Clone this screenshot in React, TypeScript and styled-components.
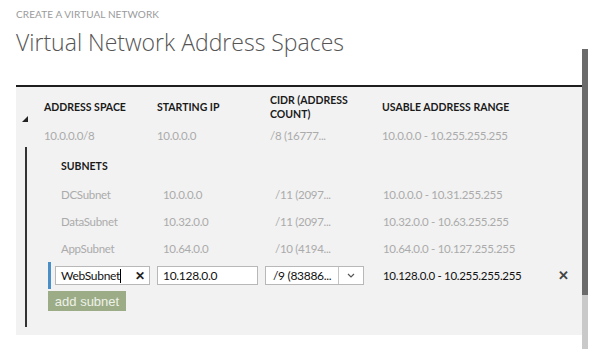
import React from 'react'
import styled, { createGlobalStyle } from 'styled-components'

interface ISubnet {
    name: string;
    start: string;
    cidr: string;
    range: string;
}

const subnets: ISubnet[] = [
    { name: 'DCSubnet', start: '10.0.0.0', cidr: '/11 (2097...', range: '10.0.0.0 - 10.31.255.255' },
    { name: 'DataSubnet', start: '10.32.0.0', cidr: '/11 (2097...', range: '10.32.0.0 - 10.63.255.255' },
    { name: 'AppSubnet', start: '10.64.0.0', cidr: '/10 (4194...', range: '10.64.0.0 - 10.127.255.255' },
]

const GlobalStyle = createGlobalStyle`
    html, body {
        margin: 0;
        padding: 0;
        background: #fff;
        font-family: Lato, "Open Sans", sans-serif;
    }
`

const Page = styled.div`
    display: flex;
    width: 602px;
    height: 349px;
    overflow: hidden;
`

const Content = styled.div`
    width: 566px;
    padding-left: 16px;
    display: flex;
    flex-direction: column;
`

const Eyebrow = styled.div`
    margin-top: 8px;
    font-size: 10px;
    line-height: 13px;
    color: #9a9a9a;
    letter-spacing: 0.1px;
`

const Title = styled.h1`
    margin: 6px 0 0;
    font-family: "Open Sans", sans-serif;
    font-weight: 300;
    font-size: 23px;
    line-height: 30px;
    color: #555;
`

const Panel = styled.div`
    margin-top: 28px;
    border-top: 2px solid #1e1e1e;
    background: #f2f2f2;
    padding: 6px 0 8px;
`

const HeadRow = styled.div`
    display: grid;
    grid-template-columns: 28px 113px 113px 112px 1fr;
    align-items: center;
    height: 28px;
`

const HeadCell = styled.div`
    font-size: 10.5px;
    font-weight: 700;
    line-height: 14px;
    color: #1a1a1a;
    text-transform: uppercase;
`

const SpaceRow = styled.div`
    display: grid;
    grid-template-columns: 28px 113px 113px 112px 1fr;
    align-items: center;
    height: 22px;
    margin-top: 3px;
`

const Toggle = styled.div`
    align-self: start;
    margin-top: -8px;
    padding-left: 6px;
    height: 6px;
    display: flex;
`

const Muted = styled.div<{ $pad?: number }>`
    padding-left: ${p => p.$pad ?? 0}px;
    font-size: 11.5px;
    letter-spacing: -0.3px;
    color: #ababab;
    white-space: nowrap;
`

const SubnetBlock = styled.div`
    margin: 1px 0 0 9px;
    border-left: 2px solid #333;
    padding: 6px 0 16px 21px;
`

const SubnetsLabel = styled(HeadCell)`
    height: 26px;
    display: flex;
    align-items: center;
    padding-left: 13px;
    margin-bottom: 2px;
`

const Row = styled.div<{ $editing?: boolean }>`
    display: grid;
    grid-template-columns: 3px 102px 108px 118px 1fr 24px;
    align-items: center;
    height: 27px;
`

const Marker = styled.div<{ $on?: boolean }>`
    align-self: stretch;
    background: ${p => (p.$on ? '#4a8fc7' : 'transparent')};
    width: 3px;
`

const Field = styled.div<{ $w: number }>`
    box-sizing: border-box;
    width: ${p => p.$w}px;
    height: 19px;
    margin-left: 4px;
    border: 1px solid #b8b8b8;
    background: #fff;
    display: flex;
    align-items: center;
    padding-left: 5px;
    font-size: 12px;
    letter-spacing: -0.3px;
    color: #111;
`

const Caret = styled.span`
    display: inline-block;
    width: 1px;
    height: 14px;
    background: #000;
`

const Clear = styled.span`
    margin-left: auto;
    margin-right: 4px;
    font-size: 12px;
    font-weight: 700;
    color: #222;
    line-height: 1;
`

const SelectText = styled.span`
    flex: 1;
    padding-left: 4px;
`

const SelectArrow = styled.span`
    width: 24px;
    height: 100%;
    border-left: 1px solid #c4c4c4;
    display: flex;
    align-items: center;
    justify-content: center;
`

const RangeText = styled.div`
    padding-left: 4px;
    font-size: 11.5px;
    letter-spacing: -0.3px;
    color: #111;
    white-space: nowrap;
`

const Remove = styled.div`
    font-size: 13px;
    font-weight: 700;
    color: #444;
    line-height: 1;
`

const AddButton = styled.button`
    display: block;
    margin-top: 2px;
    width: 78px;
    height: 20px;
    border: none;
    padding: 0;
    background: #9bac86;
    color: #eef1e8;
    font-family: "Liberation Sans", Arial, sans-serif;
    font-size: 13px;
    cursor: pointer;
`

const Scrollbar = styled.div`
    margin-top: 49px;
    width: 6px;
    background: #c9c9c9;
    display: flex;
    flex-direction: column;
`

const Thumb = styled.div`
    height: 246px;
    background: #6b6b6b;
`

export default function App() {
    return (
        <Page>
            <GlobalStyle />
            <Content>
                <Eyebrow>CREATE A VIRTUAL NETWORK</Eyebrow>
                <Title>Virtual Network Address Spaces</Title>
                <Panel>
                    <HeadRow>
                        <div />
                        <HeadCell>Address Space</HeadCell>
                        <HeadCell>Starting IP</HeadCell>
                        <HeadCell>CIDR (Address<br />Count)</HeadCell>
                        <HeadCell>Usable Address Range</HeadCell>
                    </HeadRow>
                    <SpaceRow>
                        <Toggle>
                            <svg width="6" height="6" viewBox="0 0 6 6">
                                <polygon points="6,0 6,6 0,6" fill="#222" />
                            </svg>
                        </Toggle>
                        <Muted>10.0.0.0/8</Muted>
                        <Muted>10.0.0.0</Muted>
                        <Muted>/8 (16777...</Muted>
                        <Muted>10.0.0.0 - 10.255.255.255</Muted>
                    </SpaceRow>
                    <SubnetBlock>
                        <SubnetsLabel>Subnets</SubnetsLabel>
                        {subnets.map(s => (
                            <Row key={s.name}>
                                <Marker />
                                <Muted $pad={10}>{s.name}</Muted>
                                <Muted $pad={10}>{s.start}</Muted>
                                <Muted $pad={14}>{s.cidr}</Muted>
                                <Muted $pad={4}>{s.range}</Muted>
                                <div />
                            </Row>
                        ))}
                        <Row $editing>
                            <Marker $on />
                            <Field $w={95}>
                                WebSubnet<Caret />
                                <Clear>✕</Clear>
                            </Field>
                            <Field $w={101}>10.128.0.0</Field>
                            <Field $w={99} style={{ paddingLeft: 3 }}>
                                <SelectText>/9 (83886...</SelectText>
                                <SelectArrow>
                                    <svg width="8" height="5" viewBox="0 0 8 5">
                                        <polyline points="1,1 4,4 7,1" fill="none" stroke="#555" strokeWidth="1.2" />
                                    </svg>
                                </SelectArrow>
                            </Field>
                            <RangeText>10.128.0.0 - 10.255.255.255</RangeText>
                            <Remove>✕</Remove>
                        </Row>
                        <AddButton>add subnet</AddButton>
                    </SubnetBlock>
                </Panel>
            </Content>
            <Scrollbar>
                <Thumb />
            </Scrollbar>
        </Page>
    )
}
